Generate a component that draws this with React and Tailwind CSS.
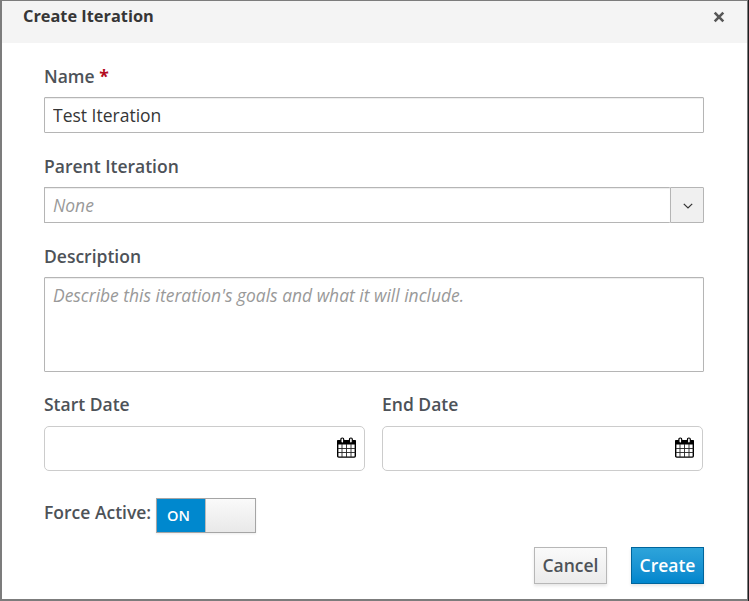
import React from "react";

const labelClass = "block h-6 whitespace-nowrap text-[17.5px] leading-6 font-semibold text-[#4d5258]";
const fieldClass =
  "block w-full rounded-[1px] border border-[#b5b5b5] bg-white px-2 text-[17.5px] text-[#363636] shadow-[inset_0_1px_1px_rgba(3,3,3,0.075)] outline-none placeholder:text-[17.45px] placeholder:text-[#999] placeholder:italic placeholder:opacity-100";

function CalendarIcon() {
  return (
    <svg className="mb-[2px] h-[21px] w-5" viewBox="0 0 20 21" fill="none">
      <rect x="0.7" y="3.7" width="17.6" height="16.4" rx="1" fill="#fff" />
      <path d="M0 7.6V4q0-1 1-1h17q1 0 1 1v3.6z" fill="#000" />
      <rect x="0.7" y="3.7" width="17.6" height="16.4" rx="1" stroke="#000" strokeWidth="1.4" />
      <path d="M5 7v13M9.5 7v13M14 7v13M1 11.5h17.5M1 15.5h17.5" stroke="#222" strokeWidth="0.9" />
      <rect x="3.9" y="1" width="2.8" height="5" rx="1.3" fill="#fff" stroke="#000" strokeWidth="1.2" />
      <rect x="12.5" y="1" width="2.8" height="5" rx="1.3" fill="#fff" stroke="#000" strokeWidth="1.2" />
    </svg>
  );
}

function DateField({ label }) {
  return (
    <div className="w-[321px]">
      <label className={labelClass}>{label}</label>
      <div className="mt-[10px] flex h-[45px] items-center rounded-[5px] border border-[#ccc] bg-white pr-[7px]">
        <input aria-label={label} className="h-full min-w-0 flex-1 bg-transparent px-2 text-[17.5px] outline-none" />
        <CalendarIcon />
      </div>
    </div>
  );
}

export default function App() {
  return (
    <div className="flex h-[601px] w-[749px] overflow-hidden bg-[#1d1d20] font-['Open_Sans',sans-serif]">
      <div className="flex w-[748px] flex-col border-t border-r border-b-2 border-l-2 border-[#7c7c7c] bg-white">
        <header className="flex h-[42px] shrink-0 items-start justify-between bg-[#f4f4f4] pt-[3px] pr-[22px] pl-[21px]">
          <h1 className="text-[16.35px] leading-6 font-bold text-[#363636]">Create Iteration</h1>
          <button aria-label="Close" className="mt-[7px] h-3 w-3">
            <svg className="h-3 w-3" viewBox="0 0 12 12">
              <path d="M1.7 1.7l8.6 8.6M10.3 1.7l-8.6 8.6" stroke="#575757" strokeWidth="2.6" />
            </svg>
          </button>
        </header>
        <main className="pt-[21px] pr-[43px] pl-[42px]">
          <label className={labelClass}>
            Name <span className="font-bold text-[#b30b1e]">*</span>
          </label>
          <input aria-label="Name" defaultValue="Test Iteration" className={`${fieldClass} mt-[9px] h-9`} />

          <label className={`${labelClass} mt-[21px]`}>Parent Iteration</label>
          <div className="mt-[9px] flex h-9">
            <input aria-label="Parent Iteration" placeholder="None" className={`${fieldClass} min-w-0 flex-1 border-r-0`} />
            <button aria-label="Open" className="flex w-[34px] items-center justify-center rounded-r-[1px] border border-[#b5b5b5] bg-[#f0f0f0]">
              <svg className="mt-px ml-px h-[6px] w-[10px]" viewBox="0 0 10 6" fill="none">
                <path d="M0.8 0.9l4.2 4L9.2 0.9" stroke="#363636" strokeWidth="1.3" />
              </svg>
            </button>
          </div>

          <label className={`${labelClass} mt-[21px]`}>Description</label>
          <textarea
            aria-label="Description"
            placeholder="Describe this iteration's goals and what it will include."
            className={`${fieldClass} mt-[9px] h-[95px] resize-none pt-[5px] leading-6`}
          />

          <div className="mt-5 flex gap-[17px]">
            <DateField label="Start Date" />
            <DateField label="End Date" />
          </div>

          <div className="mt-[27px] flex h-[35px]">
            <span className={`${labelClass} mt-[2px] w-28`}>Force Active:</span>
            <button role="switch" aria-checked="true" className="flex h-[35px] w-[100px] border border-[#a5a5a5] shadow-[0_1px_2px_rgba(3,3,3,0.08)]">
              <span className="flex h-full w-[48px] items-center bg-[#0088ce] pt-px pl-[10px] text-[14.6px] font-semibold text-white">ON</span>
              <span className="h-full flex-1 border-l border-[#bbb] bg-linear-to-b from-[#fafafa] to-[#e9e9e9]" />
            </button>
          </div>

          <div className="mt-[14px] flex justify-end gap-6 text-[17.5px] font-semibold">
            <button className="h-[37px] w-[73px] border border-[#b7b7b7] bg-linear-to-b from-[#fafafa] to-[#ebebeb] text-[#4d5258] shadow-[0_2px_3px_rgba(3,3,3,0.1)]">Cancel</button>
            <button className="h-[37px] w-[73px] border border-[#00659c] bg-linear-to-b from-[#2da4da] to-[#0086cd] text-white shadow-[0_2px_3px_rgba(3,3,3,0.1)]">Create</button>
          </div>
        </main>
      </div>
    </div>
  );
}
